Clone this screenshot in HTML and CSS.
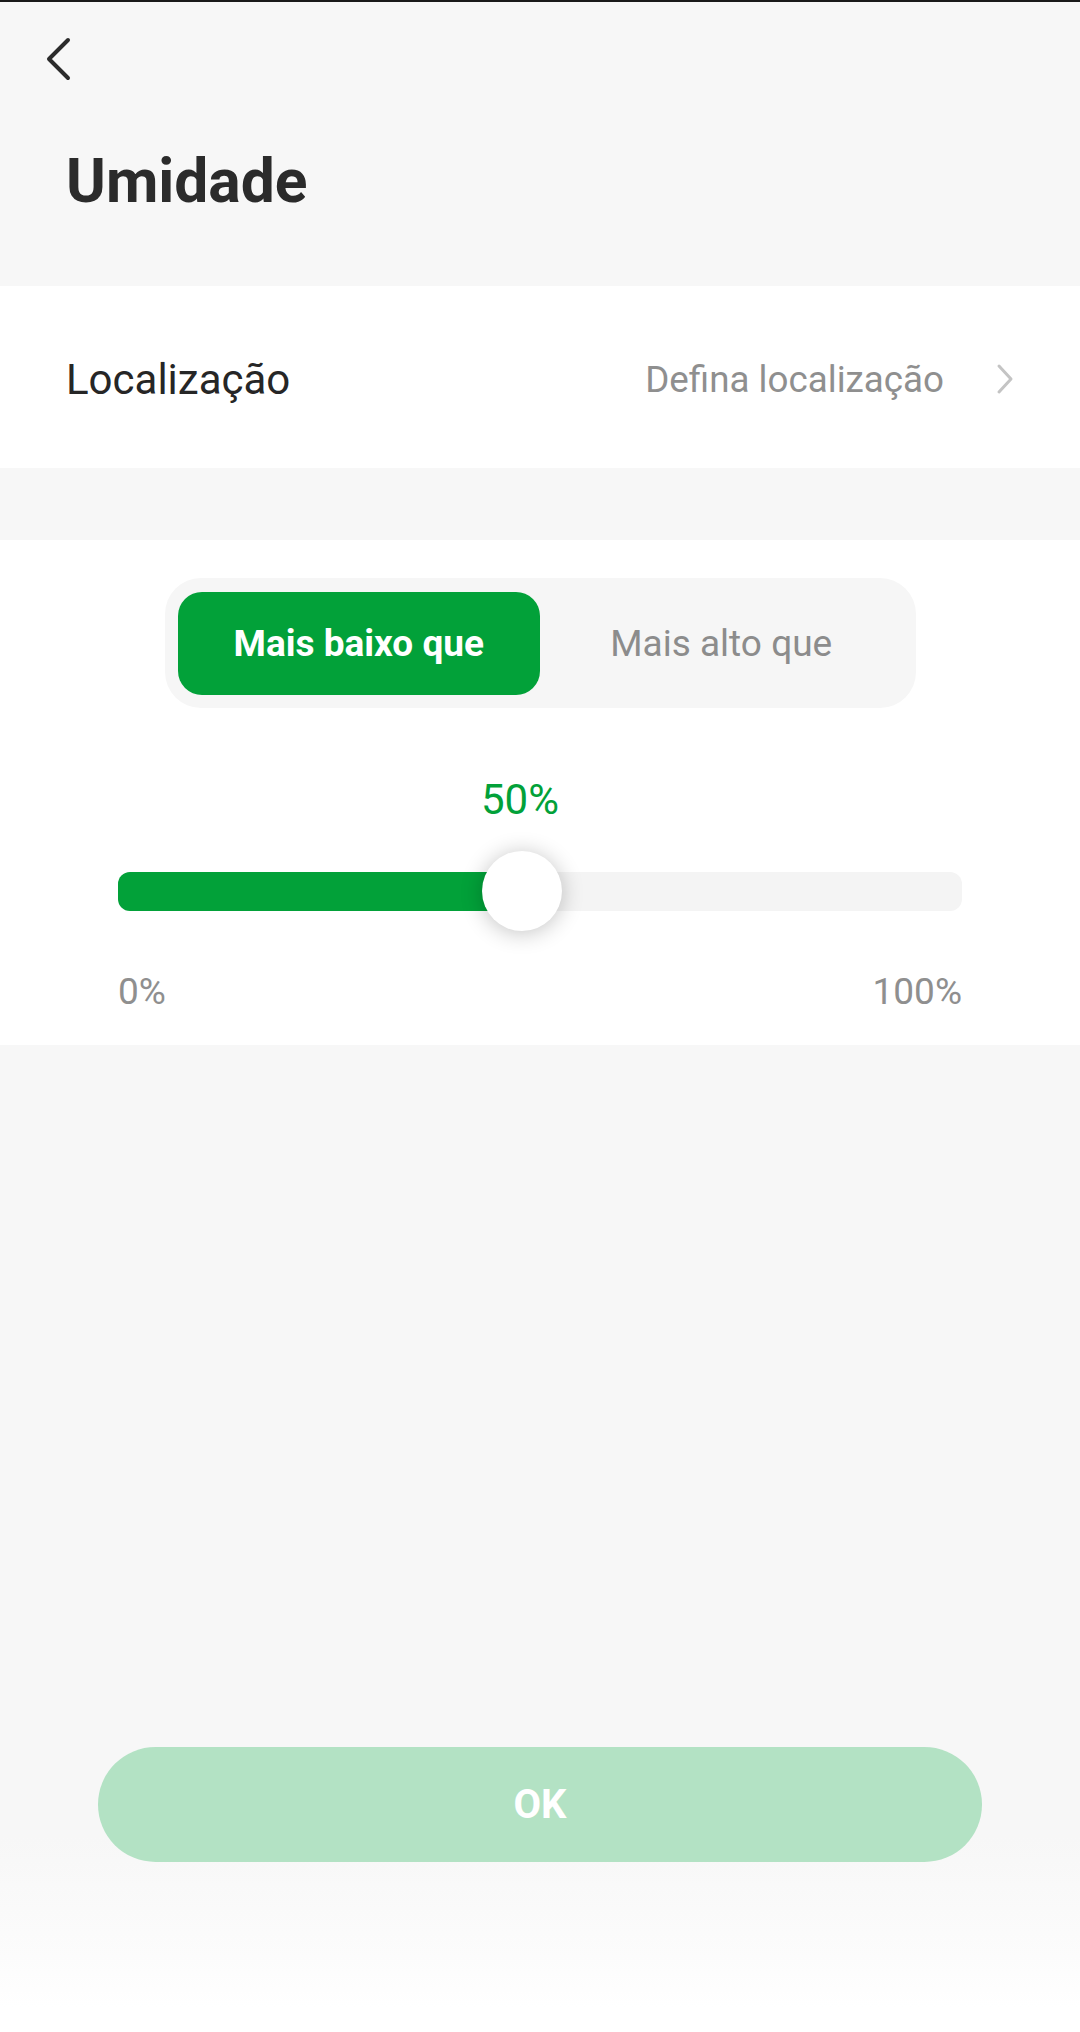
FILE: index.html
```html
<!DOCTYPE html>
<html lang="pt">
<head>
  <meta charset="UTF-8" />
  <meta name="viewport" content="width=device-width, initial-scale=1.0"/>
  <title>Umidade</title>
  <link rel="stylesheet" href="styles.css">
</head>
<body>
  <div class="page">
    <header class="header">
      <svg class="back-icon" width="40" height="60" viewBox="0 0 40 60">
        <path d="M28 10 L9 29 L28 48" fill="none" stroke="#2b2b2b" stroke-width="4" stroke-linecap="round" stroke-linejoin="round"/>
      </svg>
      <h1>Umidade</h1>
    </header>

    <div class="row">
      <span class="row-label">Localização</span>
      <span class="row-value">Defina localização</span>
      <svg class="chevron" width="20" height="32" viewBox="0 0 20 32">
        <path d="M3 3 L15 16 L3 29" fill="none" stroke="#c4c4c4" stroke-width="3" stroke-linecap="round" stroke-linejoin="round"/>
      </svg>
    </div>

    <section class="card">
      <div class="segmented">
        <button class="seg-btn active">Mais baixo que</button>
        <button class="seg-btn">Mais alto que</button>
      </div>

      <div class="value" id="valueLabel">50%</div>

      <div class="slider">
        <div class="track">
          <div class="fill" style="width: 47.9%"></div>
        </div>
        <div class="thumb" style="left: 47.9%"></div>
      </div>

      <div class="range-labels">
        <span>0%</span>
        <span>100%</span>
      </div>
    </section>

    <div class="footer">
      <button class="ok-btn" disabled>OK</button>
    </div>
  </div>
</body>
</html>
```

FILE: styles.css
```css
html, body {
  margin: 0;
  padding: 0;
}

body {
  font-family: Roboto, "Noto Sans", Arial, sans-serif;
  background-color: #f7f7f7;
  color: #2b2b2b;
}

.page {
  min-height: 100vh;
  box-sizing: border-box;
  border-top: 2px solid #1a1a1a;
  display: flex;
  flex-direction: column;
}

.header {
  padding: 28px 0 68px 0;
}

.back-icon {
  display: block;
  margin-left: 40px;
}

h1 {
  margin: 56px 0 0 66px;
  font-size: 60.5px;
  line-height: 72px;
  font-weight: 700;
  color: #2b2b2b;
}

.row {
  background-color: #fff;
  height: 182px;
  box-sizing: border-box;
  padding: 4px 63px 0 66px;
  display: flex;
  align-items: center;
}

.row-label {
  font-size: 42px;
  color: #262626;
  flex: 1;
}

.row-value {
  font-size: 36.75px;
  color: #8f8f8f;
}

.chevron {
  display: block;
  margin-left: 52px;
  margin-right: 1px;
}

.card {
  background-color: #fff;
  margin-top: 72px;
  padding: 38px 118px 31px 118px;
}

.segmented {
  width: 751px;
  height: 130px;
  box-sizing: border-box;
  margin: 0 auto;
  padding: 14px 13px 13px 13px;
  background-color: #f6f6f6;
  border-radius: 36px;
  display: flex;
}

.seg-btn {
  flex: 1;
  border: none;
  background: transparent;
  border-radius: 24px;
  font-family: inherit;
  font-size: 37px;
  color: #8c8c8c;
  padding: 0;
  cursor: pointer;
}

.seg-btn.active {
  background-color: #02a139;
  color: #fff;
  font-weight: 700;
}

.value {
  margin-top: 68px;
  text-align: center;
  font-size: 42px;
  line-height: 48px;
  color: #02a139;
  padding-right: 40px;
}

.slider {
  position: relative;
  margin-top: 27px;
  height: 80px;
  display: flex;
  align-items: center;
}

.track {
  flex: 1;
  height: 39px;
  background-color: #f4f4f4;
  border-radius: 12px;
  overflow: hidden;
}

.fill {
  height: 100%;
  background-color: #02a139;
}

.thumb {
  position: absolute;
  top: 0;
  width: 80px;
  height: 80px;
  margin-left: -40px;
  border-radius: 50%;
  background-color: #fff;
  box-shadow: 0 2px 22px rgba(0, 0, 0, 0.24);
}

.range-labels {
  margin-top: 39px;
  display: flex;
  justify-content: space-between;
  font-size: 37px;
  line-height: 44px;
  color: #8f8f8f;
}

.footer {
  margin-top: auto;
  padding: 40px 98px 170px 98px;
  background: linear-gradient(to bottom, #f7f7f7 0, #f7f7f7 130px, #fcfcfc 250px, #fff 300px);
}

.ok-btn {
  display: block;
  width: 100%;
  height: 115px;
  border: none;
  border-radius: 58px;
  background-color: #b3e2c4;
  color: #fff;
  font-family: inherit;
  font-size: 40px;
  font-weight: 700;
}
```
